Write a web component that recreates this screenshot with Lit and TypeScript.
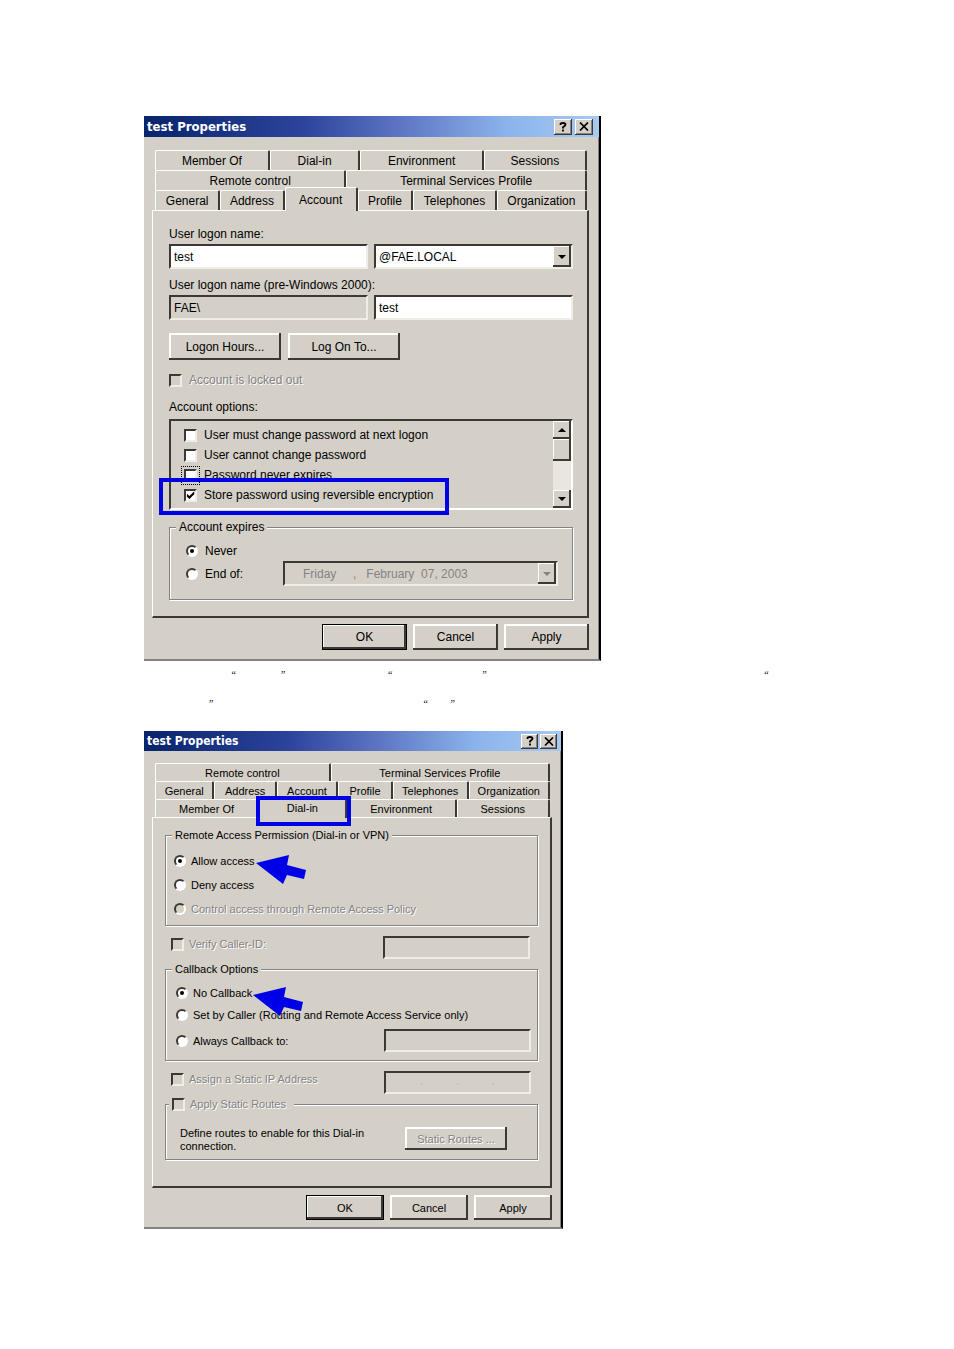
import { LitElement, html, css, nothing } from "lit";
import { customElement } from "lit/decorators.js";
import { classMap } from "lit/directives/class-map.js";

type Tab = { label: string; grow: number; selected?: boolean };

const ACCOUNT_TABS: Tab[][] = [
  [
    { label: "Member Of", grow: 115 },
    { label: "Dial-in", grow: 90 },
    { label: "Environment", grow: 124 },
    { label: "Sessions", grow: 103 },
  ],
  [
    { label: "Remote control", grow: 191 },
    { label: "Terminal Services Profile", grow: 241 },
  ],
  [
    { label: "General", grow: 65 },
    { label: "Address", grow: 64 },
    { label: "Account", grow: 73, selected: true },
    { label: "Profile", grow: 55 },
    { label: "Telephones", grow: 84 },
    { label: "Organization", grow: 91 },
  ],
];

const DIALIN_TABS: Tab[][] = [
  [
    { label: "Remote control", grow: 175 },
    { label: "Terminal Services Profile", grow: 219 },
  ],
  [
    { label: "General", grow: 59 },
    { label: "Address", grow: 62 },
    { label: "Account", grow: 61 },
    { label: "Profile", grow: 54 },
    { label: "Telephones", grow: 76 },
    { label: "Organization", grow: 82 },
  ],
  [
    { label: "Member Of", grow: 104 },
    { label: "Dial-in", grow: 87, selected: true },
    { label: "Environment", grow: 110 },
    { label: "Sessions", grow: 93 },
  ],
];

const ACCOUNT_OPTIONS = [
  { label: "User must change password at next logon" },
  { label: "User cannot change password" },
  { label: "Password never expires", focused: true },
  { label: "Store password using reversible encryption", checked: true, marked: true },
];

const blank = (n: number) => "\u00a0".repeat(n);
const NOTE =
  blank(35) + "“" + blank(18) + "”" + blank(41) + "“" + blank(36) + "”" + blank(111) + "“\n" +
  blank(26) + "”" + blank(84) + "“" + blank(9) + "”";
const DATE = "Friday" + blank(5) + "," + blank(3) + "February" + blank(2) + "07, 2003";

@customElement("app-root")
export class AppRoot extends LitElement {
  static styles = css`
    :host {
      display: block;
      min-height: 100vh;
      background: #fff;
      color: #000;
      --face: #d4d0c8;
      --shade: #848284;
      --dark: #3c3836;
      --mark: #0000e6;
    }
    * { box-sizing: border-box; }
    main {
      display: flex;
      flex-direction: column;
      align-items: flex-start;
      padding: 116px 144px 120px;
    }
    .window {
      width: 100%;
      max-width: 457px;
      display: flex;
      flex-direction: column;
      background: var(--face);
      border-right: 2px solid #000;
      border-bottom: 2px solid var(--shade);
      box-shadow: inset -1px 0 var(--shade);
      font: 12px/16px "Liberation Sans", Arial, sans-serif;
    }
    .window.small { max-width: 419px; font-size: 11px; }
    button, input, select { font: inherit; color: inherit; margin: 0; border-radius: 0; }

    .title {
      display: flex;
      align-items: center;
      gap: 3px;
      height: 21px;
      padding: 0 6px 0 3px;
      background: linear-gradient(90deg, #08246b, #2c449c 35%, #5a72c0 55%, #8cb4ec 80%, #a6caf0);
      color: #fff;
    }
    .small .title { height: 20px; gap: 2px; padding-right: 4px; }
    .title h2 {
      flex: 1;
      margin: 0;
      font: bold 13px/20px "DejaVu Sans Condensed", "DejaVu Sans", sans-serif;
      font-stretch: condensed;
    }
    .small .title h2 { font-size: 12px; }
    .sysbtn {
      display: grid;
      place-items: center;
      width: 18px;
      height: 16px;
      padding: 0;
      border: 0;
      background: var(--face);
      color: #000;
      box-shadow: inset -1px -1px var(--dark), inset 1px 1px #fff, inset -2px -2px var(--shade);
    }
    .small .sysbtn { width: 17px; height: 15px; }

    .body { padding: 13px 10px 9px 8px; }
    .small .body { padding: 12px 9px 7px 8px; }
    .tabrow { display: flex; height: 20px; margin: 0 2px 0 3px; }
    .small .tabrow { height: 18px; }
    .tab {
      min-width: 0;
      padding: 0;
      border: 1px solid #fff;
      border-bottom: 0;
      border-right: 2px solid var(--dark);
      border-radius: 2px 2px 0 0;
      background: var(--face);
      white-space: nowrap;
      text-align: center;
      line-height: 18px;
    }
    .small .tab { line-height: 16px; }
    .tab.selected {
      position: relative;
      z-index: 1;
      margin: -3px 0 -1px;
    }
    .panel {
      display: flex;
      flex-direction: column;
      border: 1px solid #fff;
      border-right: 2px solid var(--dark);
      border-bottom: 2px solid var(--dark);
      padding: 15px 14px 16px 16px;
    }
    .small .panel { padding: 9px 12px 26px 12px; }

    .field { display: grid; grid-template-columns: 1fr 1fr; gap: 2px 6px; margin-bottom: 8px; }
    .field label { grid-column: 1 / -1; }
    .box {
      width: 100%;
      min-width: 0;
      height: 25px;
      padding: 0 3px;
      border: 2px solid;
      border-color: var(--dark) #f0ede6 #f0ede6 var(--dark);
      outline: 0;
      background: #fff;
      appearance: none;
    }
    .box:disabled, .box.flat { background: var(--face); opacity: 1; }
    .box.dim { color: var(--shade); }
    .small .box { height: 23px; }
    .combo { position: relative; }
    .drop {
      position: absolute;
      top: 2px;
      right: 2px;
      bottom: 2px;
      width: 18px;
      pointer-events: none;
    }
    .cap {
      display: grid;
      place-items: center;
      padding: 0;
      border: 0;
      background: var(--face);
      box-shadow: inset -2px -2px var(--dark), inset 1px 1px #fff;
    }
    .cap svg { display: block; }

    .push {
      width: 85px;
      height: 26px;
      padding: 0;
      border: 0;
      background: var(--face);
      box-shadow: inset -2px -2px var(--dark), inset 2px 2px #fff;
    }
    .small .push { width: 78px; height: 25px; }
    .push.default {
      border: 1px solid #000;
      box-shadow: inset -2px -2px var(--dark), inset 1px 1px #fff;
    }
    .push:disabled, .off {
      color: var(--shade);
      text-shadow: 1px 1px #fff;
    }
    .pair { display: flex; gap: 7px; margin-top: 5px; }
    .pair .push { width: 112px; height: 27px; }
    .footer { display: flex; justify-content: flex-end; gap: 6px; margin-top: 6px; }
    .small .footer { margin-top: 7px; }

    .choice { display: flex; align-items: center; gap: 7px; position: relative; }
    .small .choice { gap: 5px; }
    .tick {
      flex: none;
      display: grid;
      place-items: center;
      width: 13px;
      height: 13px;
      appearance: none;
      border: 2px solid;
      border-color: var(--dark) #f0ede6 #f0ede6 var(--dark);
      background: #fff;
    }
    .tick:disabled { background: var(--face); }
    .tick:checked::before {
      content: "";
      width: 9px;
      height: 9px;
      background: #000;
      clip-path: polygon(10% 35%, 38% 60%, 92% 8%, 92% 42%, 38% 95%, 10% 70%);
    }
    .tick.focused { outline: 1px dotted #000; outline-offset: 2px; }
    .radio {
      flex: none;
      display: grid;
      place-items: center;
      width: 12px;
      height: 12px;
      appearance: none;
      border: 2px solid;
      border-color: var(--dark) #fff #fff var(--dark);
      border-radius: 50%;
      background: #fff;
    }
    .radio:disabled { background: var(--face); }
    .radio:checked::before {
      content: "";
      width: 4px;
      height: 4px;
      border-radius: 50%;
      background: #000;
    }
    .locked { margin-top: 12px; }
    .heading { margin: 11px 0 4px; }
    .list {
      display: flex;
      height: 91px;
      border: 2px solid;
      border-color: var(--dark) #fff #fff var(--dark);
    }
    .options { flex: 1; padding: 4px 0 0 13px; }
    .options .choice { height: 20px; }
    .scroll {
      display: flex;
      flex-direction: column;
      width: 18px;
      background: #e9e6e1;
    }
    .scroll .cap { height: 18px; }
    .scroll .thumb { height: 22px; }
    .scroll .track { flex: 1; }

    .mark { position: absolute; border: 4px solid var(--mark); pointer-events: none; }
    .mark.option { inset: -7px auto -10px -25px; width: 290px; }
    .mark.tabmark { inset: -1px -6px -8px -4px; }

    fieldset {
      min-width: 0;
      margin: 0;
      border: 1px solid var(--shade);
      box-shadow: 1px 1px #fff, inset 1px 1px #fff;
      padding: 0;
    }
    legend { margin-left: 6px; padding: 0 3px; background: var(--face); }
    .expires { margin-top: 9px; padding: 8px 13px 13px 16px; }
    .expires legend { margin-left: -10px; }
    .expires .until { display: flex; align-items: center; height: 25px; margin-top: 2px; }
    .expires .until .choice { width: 97px; }
    .expires .combo { flex: 0 1 275px; }
    .expires .box { padding-left: 18px; }

    .stack { display: flex; flex-direction: column; gap: 8px; }
    .access { padding: 10px 8px 8px; }
    .callback { padding: 8px 6px 8px 10px; gap: 6px; }
    .callback .row { display: flex; align-items: center; justify-content: space-between; }
    .line { display: flex; align-items: flex-start; justify-content: space-between; }
    .callback .box, .line .box { width: 147px; }
    .line { padding: 0 8px 0 6px; }
    .line.verify { margin: 10px 0 2px; }
    .line.assign { margin: 10px 0 2px; padding-right: 7px; }
    .ip { display: flex; justify-content: space-around; padding: 0 18px; color: #b4b0a8; }
    .routes { padding: 15px 30px 6px 14px; }
    .routes legend { margin-left: -11px; padding-right: 8px; }
    .routes .row { display: flex; align-items: flex-start; justify-content: space-between; }
    .routes p { margin: 0; max-width: 200px; line-height: 13px; }
    .routes .push { width: 102px; height: 23px; }
    .small .stack .choice { align-self: flex-start; }
    .small .callback .row { height: 23px; }
    .small .callback .row .choice { align-self: center; }

    .arrow {
      position: absolute;
      left: 100%;
      top: 2px;
      width: 50px;
      height: 30px;
      margin-left: 1px;
      fill: var(--mark);
      pointer-events: none;
      z-index: 1;
    }
    .note {
      margin: -1px 0 1px;
      height: 70px;
      white-space: pre;
      font: 10px/29px "Liberation Serif", "Times New Roman", serif;
    }
  `;

  private titleBar() {
    return html`<header class="title">
      <h2>test Properties</h2>
      <button class="sysbtn" aria-label="Help">
        <svg width="8" height="10" viewBox="0 0 8 10">
          <path d="M1.5 3V2.2Q1.5 1 4 1T6.5 2.6Q6.5 3.8 4 5.2V6.4M4 7.6V9.4" fill="none" stroke="#000" stroke-width="1.8" />
        </svg>
      </button>
      <button class="sysbtn" aria-label="Close">
        <svg width="10" height="9" viewBox="0 0 10 9">
          <path d="M1 .5L9 8.5M9 .5L1 8.5" fill="none" stroke="#000" stroke-width="1.7" />
        </svg>
      </button>
    </header>`;
  }

  private tabs(rows: Tab[][], marked = false) {
    return rows.map(
      (row) => html`<div class="tabrow" role="tablist">
        ${row.map(
          (t) => html`<button
            role="tab"
            aria-selected=${t.selected ? "true" : "false"}
            class=${classMap({ tab: true, selected: !!t.selected })}
            style="flex: ${t.grow} 1 0px"
          >${t.label}${marked && t.selected ? html`<span class="mark tabmark"></span>` : nothing}</button>`
        )}
      </div>`
    );
  }

  private arrowGlyph(up = false, color = "#000") {
    return html`<svg width="8" height="4" viewBox="0 0 8 4">
      <path d=${up ? "M0 4L4 0L8 4Z" : "M0 0H8L4 4Z"} fill=${color} />
    </svg>`;
  }

  private pointer() {
    return html`<svg class="arrow" viewBox="0 0 50 30" aria-hidden="true">
      <path d="M0 8L33 0L31 10L50 15L48 24L31 20L27 29Z" />
    </svg>`;
  }

  private radio(group: string, label: string, opts: { checked?: boolean; disabled?: boolean; pointed?: boolean } = {}) {
    return html`<label class=${classMap({ choice: true, off: !!opts.disabled })}>
      <input class="radio" type="radio" name=${group} ?checked=${opts.checked} ?disabled=${opts.disabled} />
      <span>${label}</span>${opts.pointed ? this.pointer() : nothing}
    </label>`;
  }

  private footer() {
    return html`<footer class="footer">
      <button class="push default">OK</button>
      <button class="push">Cancel</button>
      <button class="push">Apply</button>
    </footer>`;
  }

  private accountWindow() {
    return html`<section class="window" aria-label="test Properties, Account">
      ${this.titleBar()}
      <div class="body">
        ${this.tabs(ACCOUNT_TABS)}
        <div class="panel">
          <div class="field">
            <label for="logon">User logon name:</label>
            <input class="box" id="logon" type="text" value="test" />
            <div class="combo">
              <select class="box" aria-label="Domain suffix"><option>@FAE.LOCAL</option></select>
              <span class="cap drop">${this.arrowGlyph()}</span>
            </div>
          </div>
          <div class="field">
            <label for="logon2">User logon name (pre-Windows 2000):</label>
            <input class="box flat" type="text" readonly value="FAE\\" aria-label="Domain" />
            <input class="box" id="logon2" type="text" value="test" />
          </div>
          <div class="pair">
            <button class="push">Logon Hours...</button>
            <button class="push">Log On To...</button>
          </div>
          <label class="choice locked off"><input class="tick" type="checkbox" disabled /><span>Account is locked out</span></label>
          <div class="heading">Account options:</div>
          <div class="list">
            <div class="options">
              ${ACCOUNT_OPTIONS.map(
                (o) => html`<label class="choice">
                  <input class=${classMap({ tick: true, focused: !!o.focused })} type="checkbox" ?checked=${o.checked} />
                  <span>${o.label}</span>
                  ${o.marked ? html`<span class="mark option"></span>` : nothing}
                </label>`
              )}
            </div>
            <div class="scroll">
              <button class="cap" aria-label="Scroll up">${this.arrowGlyph(true)}</button>
              <div class="cap thumb"></div>
              <div class="track"></div>
              <button class="cap" aria-label="Scroll down">${this.arrowGlyph()}</button>
            </div>
          </div>
          <fieldset class="expires">
            <legend>Account expires</legend>
            ${this.radio("expires", "Never", { checked: true })}
            <div class="until">
              ${this.radio("expires", "End of:")}
              <div class="combo">
                <input class="box dim" type="text" disabled .value=${DATE} aria-label="Expiry date" />
                <span class="cap drop">${this.arrowGlyph(false, "#848284")}</span>
              </div>
            </div>
          </fieldset>
        </div>
        ${this.footer()}
      </div>
    </section>`;
  }

  private dialinWindow() {
    return html`<section class="window small" aria-label="test Properties, Dial-in">
      ${this.titleBar()}
      <div class="body">
        ${this.tabs(DIALIN_TABS, true)}
        <div class="panel">
          <fieldset>
            <legend>Remote Access Permission (Dial-in or VPN)</legend>
            <div class="stack access">
              ${this.radio("access", "Allow access", { checked: true, pointed: true })}
              ${this.radio("access", "Deny access")}
              ${this.radio("access", "Control access through Remote Access Policy", { disabled: true })}
            </div>
          </fieldset>
          <div class="line verify">
            <label class="choice off"><input class="tick" type="checkbox" disabled /><span>Verify Caller-ID:</span></label>
            <input class="box" type="text" disabled aria-label="Caller ID" />
          </div>
          <fieldset>
            <legend>Callback Options</legend>
            <div class="stack callback">
              ${this.radio("callback", "No Callback", { checked: true, pointed: true })}
              ${this.radio("callback", "Set by Caller (Routing and Remote Access Service only)")}
              <div class="row">
                ${this.radio("callback", "Always Callback to:")}
                <input class="box" type="text" disabled aria-label="Callback number" />
              </div>
            </div>
          </fieldset>
          <div class="line assign">
            <label class="choice off"><input class="tick" type="checkbox" disabled /><span>Assign a Static IP Address</span></label>
            <div class="box flat ip"><span>.</span><span>.</span><span>.</span></div>
          </div>
          <fieldset class="routes">
            <legend><label class="choice off"><input class="tick" type="checkbox" disabled /><span>Apply Static Routes</span></label></legend>
            <div class="row">
              <p>Define routes to enable for this Dial-in connection.</p>
              <button class="push" disabled>Static Routes ...</button>
            </div>
          </fieldset>
        </div>
        ${this.footer()}
      </div>
    </section>`;
  }

  render() {
    return html`<main>
      ${this.accountWindow()}
      <p class="note">${NOTE}</p>
      ${this.dialinWindow()}
    </main>`;
  }
}
